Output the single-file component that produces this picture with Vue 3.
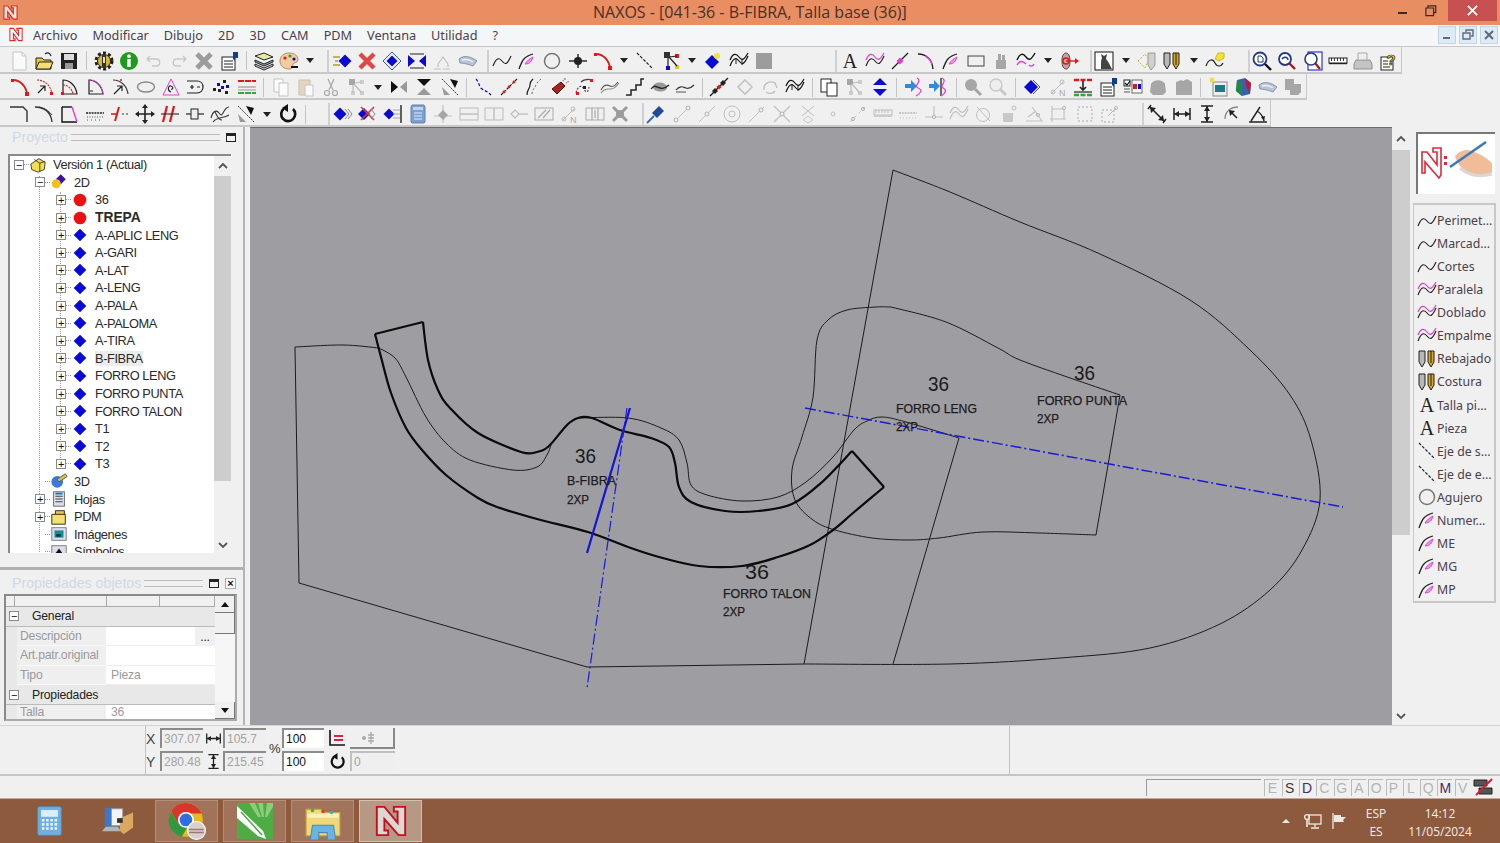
<script setup>
// small helpers so the icon table below stays readable
const L = (d, c = '#111', w = 1.4) => `<path d="${d}" fill="none" stroke="${c}" stroke-width="${w}"/>`
const F = (d, c, s = 'none') => `<path d="${d}" fill="${c}" stroke="${s}"/>`
const O = (x, y, r, f = 'none', s = 'none', w = 1) => `<circle cx="${x}" cy="${y}" r="${r}" fill="${f}" stroke="${s}" stroke-width="${w}"/>`
const R = (x, y, w, h, f, s = 'none') => `<rect x="${x}" y="${y}" width="${w}" height="${h}" fill="${f}" stroke="${s}"/>`
const D = (x, y, r, c) => F(`M${x - r} ${y}L${x} ${y - r}L${x + r} ${y}L${x} ${y + r}Z`, c)

const G = '#a6a6a6'
const PK = '#e23fd0'
const RD = '#e01818'
const BL = '#0a0ad0'
const WAVE = 'M1 15C4 7 7 6 10 10S15 14 19 5'
const WAVE2 = 'M1 9C4 2 7 2 10 6S15 9 19 2'
const ARC = 'M2 3C10 3 16 9 17 17'
const SLIP = F('M1 8C6 4 12 5 19 10L15 15C10 13 5 12 2 12Z', '#b8c4d4', '#8a96a6') + L('M4 9C8 8 12 9 15 11', '#eef')
const PROPS = R(3, 6, 13, 13, '#fff', '#222') + L('M5 10h9M5 13h9M5 16h9', '#222', 1.2) + F('M14 1h5v6h-3v3l-2-2z', '#123a9a')

const icons = {
  doc: F('M4 1h9l4 4v14H4z', '#fafafa', '#c4c4c4') + L('M13 1v4h4', '#c4c4c4', 1),
  open: F('M2 7h6l2 2h7v9H2z', '#e8c840', '#222') + F('M5 11h14l-3 7H2z', '#f4e070', '#222') + L('M11 3c3-2 5-1 6 2', '#222', 1.2),
  save: R(2, 2, 16, 16, '#222') + R(5, 3, 10, 6, '#ddd') + R(6, 12, 8, 6, '#999'),
  gear: O(10, 10, 8, 'none', '#222', 3).replace('/>', ' stroke-dasharray="3 2.2"/>') + O(10, 10, 6.5, '#d8b830', '#222', 1) + R(8, 4, 4, 12, '#333') + R(9, 6, 2, 6, '#ddd'),
  info: O(10, 10, 9, '#1f9a1f') + R(8.3, 8, 3.4, 8, '#fff') + O(10, 5.2, 1.9, '#fff'),
  undo: L('M6 5L3 8l3 3M3 8h9c5 0 5 7 0 7H8', '#c8c8c8', 1.4),
  redo: L('M14 5l3 3-3 3M17 8H8c-5 0-5 7 0 7h4', '#c8c8c8', 1.4),
  xgray: L('M3 3L17 17M17 3L3 17', '#9c9c9c', 5),
  xred: L('M3 3L17 17M17 3L3 17', '#e04848', 4.5),
  props: PROPS,
  layers: F('M1 5l9-3 9 4-9 3z', '#e8e8a8', '#222') + F('M1 9l9 4 9-4v2l-9 4-9-4z', '#8ab', '#222') + F('M1 13l9 4 9-4v2l-9 4-9-4z', '#ddd', '#222'),
  palette: F('M10 2c6 0 9 3 9 7 0 3-4 2-5 4s1 5-4 5c-5 0-9-3-9-8s4-8 9-8z', '#f0cca0', '#b09060') + O(6, 7, 1.6, RD) + O(11, 5, 1.6, '#2a2') + O(15, 8, 1.6, BL) + R(12, 15, 7, 2, '#111'),
  diamArrow: D(13, 10, 6.5, BL) + L('M1 6h7M3 10h3M1 14h7', '#b0a020', 1.4),
  diamDash: D(10, 10, 5.5, BL) + L('M10 1L19 10L10 19L1 10Z', '#3458b0', 1),
  hourglass: F('M1 4l7 6-7 6z', BL) + F('M19 4l-7 6 7 6z', BL) + L('M3 3h14M3 17h14', '#222', 1.2),
  dimTree: L('M2 18h7M11 18h7M6 13l5-7 5 7M6 13v3M16 13v3', '#c0c0c0', 1.2),
  slipper: SLIP,
  wave: L(WAVE, '#222', 1.15),
  curvePink: L('M2 18C5 10 6 6 16 3', '#222', 1.3) + F('M8 13c2-3 4-5 8-7-1 4-3 7-8 7z', '#e898e0', PK),
  circle: O(10, 10, 7.5, 'none', '#777', 1.5),
  cross: L('M1 10h18', '#222', 1.4) + O(10, 10, 4, '#222') + L('M10 3v14', '#222', 1.4),
  arcRed: L('M3 3C10 3 16 9 17 17', '#d02020', 1.8) + R(1, 2, 3, 3, RD) + R(15, 15, 4, 4, RD),
  dash: L('M2 2L18 18', '#222', 1.2).replace('/>', ' stroke-dasharray="3 1.5"/>'),
  tree: R(3, 1, 6, 6, '#333') + R(14, 3, 4, 4, RD) + R(5, 15, 4, 4, BL) + R(14, 14, 4, 4, '#e8c020') + L('M7 7v9M8 6l8-1M8 6l8 9', '#222', 1.2),
  diamYellow: D(9, 11, 7, BL) + O(14, 5, 3, '#f0e040'),
  curvesArrow: L(WAVE2, '#111', 1.2) + L(WAVE, '#111', 1.2) + L('M7 7v6M13 8v6', '#222', 1),
  graySq: R(2, 2, 16, 16, '#9c9c9c'),
  A: `<text x="10" y="17" text-anchor="middle" font-size="20" font-family="Liberation Serif" fill="#222">A</text>`,
  wavePink: L(WAVE2, PK, 1.2) + L(WAVE, '#222', 1.15),
  linePink: L('M2 18L18 2', '#222', 1.2) + D(10, 10, 3.5, PK),
  cornerPink: L('M2 3C10 3 16 8 17 18', '#222', 1.4) + L('M9 5C13 7 15 10 16 13', PK, 1.4),
  rect: R(2, 5, 16, 10, 'none', '#444'),
  hand: F('M5 9h10v9H5zM7 3h3v6H7zM11 4h3v5h-3z', G),
  curvesPink: L('M1 9C4 2 7 2 10 6S15 9 19 2') + L('M1 14C4 9 7 10 10 13', PK) + L('M13 14c2 2 4 1 5-1', PK),
  target: F('M3 10C3 4 5 2 7 2s4 2 4 8-2 8-4 8-4-2-4-8z', '#c8a0a0', '#444') + O(7, 10, 3, 'none', RD, 1.4) + L('M7 10h10', RD, 1.4) + F('M16 7l4 3-4 3z', RD),
  cat: R(1, 1, 18, 18, '#fff', '#111') + F('M7 18c0-7 0-9 1-11L7 3l3 2 3-2-1 5c3 3 4 7 6 10z', '#444'),
  diamDashY: L('M1 10L8 3 12 8 8 17Z', '#c8b820', 1).replace('/>', ' stroke-dasharray="2 1.5"/>') + F('M11 2h7v12l-4 5-3-5z', '#d0d0d0', '#999'),
  pencils: F('M2 2h6v11l-3 5-3-5z', '#b8b8b8', '#222') + F('M11 2h6v11l-3 5-3-5z', '#d8a820', '#222') + L('M14 2v12', '#222', 1),
  yellowCurve: L('M1 15C4 7 8 8 10 12S16 16 18 12', '#222', 1.2) + F('M10 8l3-6h6v5l-5 3z', '#f4e430', '#c8b820'),
  zoomDoc: O(8, 8, 6.5, '#fff', '#223a80', 1.8) + L('M13 13l6 6', '#111', 2.4) + L('M6 5h3l2 2v4H6z', '#223a80', 1),
  zoomBack: O(8, 8, 6, '#fff', '#223a80', 1.8) + L('M12 12l6 6', '#a01818', 2.4) + L('M5 8c2-3 6-2 6 1', '#223a80', 1.4),
  zoomPage: R(5, 1, 14, 18, '#fff', BL) + O(8, 8, 6, '#fff', '#223a80', 1.6) + L('M12 12l5 6', '#a01818', 2.2),
  ruler: R(1, 7, 18, 5, '#fff', '#222') + L('M3.5 7v3M6.5 7v3M9.5 7v3M12.5 7v3M15.5 7v3', '#222', 0.9) + R(1, 12, 18, 1.2, '#222'),
  printer: F('M3 9h14l2 4v5H1v-5z', '#c4c4c4', '#909090') + F('M5 2h9v7H5z', '#eee', '#aaa'),
  help: R(3, 6, 12, 13, '#fff', '#222') + L('M5 10h5M5 13h5M5 16h7', '#222', 1) + `<text x="13" y="14" text-anchor="middle" font-size="15" font-weight="700" font-family="Liberation Sans" fill="#efe020" stroke="#222" stroke-width=".7">?</text>`,
  arcArrow: L(ARC, '#c83030', 1.2).replace('/>', ' stroke-dasharray="2 1"/>') + L('M3 16L10 9M5 9h5v5', '#222', 1.2) + R(15, 15, 3, 3, RD),
  sector: L('M3 3C10 3 16 9 17 17H3z', '#222', 1.2) + L('M3 8C8 8 12 12 13 17', RD, 1.2).replace('/>', ' stroke-dasharray="2 1"/>') + R(1, 15, 3, 3, RD),
  sector2: L('M3 3C10 3 16 9 17 17H3z', '#222', 1.2) + L('M3 3C10 3 16 9 17 17', PK, 1.2).replace('/>', ' stroke-dasharray="2 1"/>') + L('M4 14h3', '#222', 1),
  arcArrow2: L(ARC, '#444', 1.2) + L('M3 17L11 9M6 9h5v5', '#222', 1.2) + O(10, 3, 1, RD),
  ellipse: `<ellipse cx="10" cy="10" rx="8.5" ry="5" fill="none" stroke="#888" stroke-width="1.4"/>`,
  triPink: F('M10 2L18 18H2z', 'none', PK) + L('M10 15c-4-1-3-7 0-6s2 4 0 3', '#222', 1.1),
  dShape: L('M1 4h10c8 0 8 12 0 12H1', '#222', 1.2) + L('M4 10h4M6 8v4M11 10h3', '#222', 1.2),
  dots: R(12, 3, 3, 3, '#222') + R(6, 6, 3, 3, BL) + R(15, 8, 3, 3, BL) + R(2, 11, 3, 3, '#222') + R(10, 9, 3, 3, BL) + R(7, 12, 3, 3, '#222') + R(14, 14, 3, 3, '#222'),
  lines: L('M1 4h18', RD, 2).replace('/>', ' stroke-dasharray="6 1"/>') + L('M1 10h18', '#999', 1.2) + L('M1 13h18', '#999', 1) + L('M1 16h18', '#3a3', 2).replace('/>', ' stroke-dasharray="6 1"/>'),
  copy: F('M3 2h9v13H3z', '#fafafa', '#c4c4c4') + F('M8 6h9v13H8z', '#fafafa', '#c4c4c4'),
  paste: F('M3 3h11v15H3z', '#e2d6c0', '#c8c0b0') + F('M9 8h8v11H9z', '#fafafa', '#c4c4c4'),
  scissors: L('M7 2l5 11M13 2L8 13', G, 1.2) + O(6, 16, 2.5, 'none', G, 1.2) + O(14, 16, 2.5, 'none', G, 1.2),
  treeGray: R(3, 2, 6, 6, G) + R(14, 3, 4, 4, '#ccc') + R(5, 14, 4, 4, '#ccc') + R(14, 14, 4, 4, '#ccc') + L('M7 8v7M9 6l6-1M8 7l7 8', '#bbb', 1.2),
  mirror: F('M2 4l7 6-7 6z', '#111') + F('M18 4l-7 6 7 6z', '#999'),
  mirrorV: F('M3 2h14l-7 7z', '#111') + F('M3 18h14l-7-7z', '#999'),
  mirrorD: L('M2 2L18 18', '#333', 1).replace('/>', ' stroke-dasharray="2 1"/>') + F('M10 2l8 2-3 7z', '#111') + F('M2 10l8 8-6 0z', '#999'),
  dashBlue: L('M2 2c3 3 3 8 6 10s5 2 9 6', BL, 1.2).replace('/>', ' stroke-dasharray="3 2"/>'),
  dashRed: L('M2 18L18 2', '#222', 1.2).replace('/>', ' stroke-dasharray="3 1"/>') + O(5, 15, 1.4, RD) + O(10, 10, 1.4, RD) + O(15, 5, 1.4, RD),
  curveDash: L('M3 18c0-6 3-6 3-10s2-5 3-6', '#222', 1.2) + L('M8 17c0-5 3-6 4-9s3-4 5-6', '#666', 1).replace('/>', ' stroke-dasharray="2 2"/>'),
  rocket: F('M3 12L12 5l4 4-8 8z', '#a82020', '#501010') + L('M14 4l2-3M17 6l3-2M16 2l1 0', '#b05050', 1.2).replace('/>', ' stroke-dasharray="1 1"/>'),
  redCurves: L('M1 16c2-8 6-8 8-4s4 4 5-2', '#444', 1.1).replace('/>', ' stroke-dasharray="2 1.5"/>') + L('M6 5c3-3 8-3 12-2', '#444', 1.1) + R(1, 15, 3, 3, RD) + R(15, 2, 3, 3, RD) + R(8, 9, 3, 3, '#222'),
  curvePair: L('M1 13C4 7 8 8 10 9s5 0 8-4', '#555', 1.1) + L('M1 16C4 11 8 12 11 12s5-2 8-6', '#888', 1.1),
  stairs: L('M1 18h5v-5h5V8h5V2h3', '#222', 1.5),
  waveBlob: F('M3 10c0-6 13-6 14 0s-14 6-14 0z', '#999') + L('M1 12c5-8 8 5 18-4', '#222', 1.3),
  waveSmall: L('M1 13c4-5 7-3 10-2s5 0 8-3', '#333', 1.2) + L('M1 15h10', '#555', 1),
  lineDiam: L('M1 19L19 1', '#222', 1.4) + D(6, 14, 3, '#222') + D(10, 10, 2.6, RD) + D(14, 6, 3, '#222'),
  rotA: D(10, 10, 5.5, 'none') + L('M10 3L17 10L10 17L3 10Z', '#c4c4c4', 1.6),
  rotB: L('M4 13C3 7 9 3 15 6l2 5M15 14c-2 3-6 3-9 1', '#c0c0c0', 1.4),
  copyBlack: R(2, 2, 10, 13, '#fff', '#222') + R(8, 6, 10, 13, '#fff', '#222'),
  blueUpDown: F('M3 8L10 1l7 7z', BL) + F('M3 12h14l-7 7z', BL) + L('M1 10h18', '#eee', 1),
  arrowPink: F('M1 7h6V3l6 6-6 6v-4H1z', '#2c8ce0') + L('M13 1c6 3-4 8 1 10s3 5-2 8', PK, 1.3),
  arrowLine: F('M0 7h5V3l6 6-6 6v-4H0z', '#2c8ce0') + L('M12 1v18', '#111', 1.2) + L('M13 1c6 3-3 8 1 10s3 5-2 8', PK, 1.3),
  zoomSolid: O(8, 8, 6, G) + L('M12 12l6 6', G, 3),
  zoomLight: O(8, 8, 6, '#eee', '#c8c8c8', 1.4) + L('M12 12l6 6', '#c8c8c8', 3),
  diamHalf: D(8, 10, 7, BL) + L('M10 3l7 7-7 7', '#555', 1),
  nGray: L('M3 17L15 5', '#bbb', 1) + O(5, 15, 2, 'none', '#bbb') + O(14, 5, 2, 'none', '#bbb') + `<text x="11" y="19" font-size="9" font-family="Liberation Sans" fill="#aaa">N</text>`,
  redGreen: L('M1 3h18', RD, 2.4).replace('/>', ' stroke-dasharray="5 1.5"/>') + L('M10 4v9M7 10l3 3 3-3', '#222', 1.6) + L('M1 15h18', '#222', 1.2) + L('M1 18h18', '#3a3', 2.4).replace('/>', ' stroke-dasharray="5 1.5"/>'),
  checkRB: R(1, 3, 6, 6, '#fff', '#222') + L('M2 6l2 2 3-4', '#111', 1.2) + L('M1 12h6M1 15h6', '#555', 1) + R(9, 3, 10, 13, '#fff', '#666') + R(10, 7, 4, 5, RD) + R(15, 7, 3, 5, BL),
  blobA: F('M3 7c2-5 12-5 14 0l1 8-3 3H5l-3-3z', G),
  blobB: F('M2 5l5-2 2 1 4-2 5 3v13H2z', G),
  imgNew: R(5, 5, 14, 14, '#eee', '#888') + R(7, 8, 10, 7, '#1a7a8a') + O(4, 3, 2.5, '#f0e040'),
  colors: F('M4 3l8-2 6 5-1 11-8 2-6-5z', '#3a60b0') + F('M4 3l5 2 0 14-6-5z', '#208a40') + F('M12 1l6 5-1 11-4-8z', '#b02040'),
  blobC: F('M2 2h9v5h7v8l-3 3H7v-5H2z', G),
  corner: L('M1 3h13l4 4v11', '#333', 1.4),
  cornerC: L('M1 3C10 3 17 8 18 18', '#333', 1.4) + L('M5 3c5 1 9 3 13 8', '#333', 1),
  boxPink: L('M3 3h10', '#111', 1.4) + L('M3 3v15h15', '#111', 1.4) + L('M13 3l5 15', PK, 1.4),
  dashes: L('M1 9h18', '#222', 1.4).replace('/>', ' stroke-dasharray="2 .8"/>') + L('M2 13h16', '#555', 1).replace('/>', ' stroke-dasharray="1 1.5"/>') + L('M2 16h16', '#555', 1).replace('/>', ' stroke-dasharray="1 3"/>'),
  redLine: L('M1 10h7', RD, 1.6) + L('M9 3L5 17', RD, 2) + L('M12 10h7', '#333', 1).replace('/>', ' stroke-dasharray="2 2"/>'),
  move: L('M10 1v18M1 10h18', '#222', 1.6) + F('M10 0l3 4H7zM10 20l3-4H7zM0 10l4-3v6zM20 10l-4-3v6z', '#222'),
  redSlash: L('M7 2L3 18M14 2L10 18', RD, 2.2) + L('M1 10h18', '#333', 1.2),
  lineRect: L('M1 10h18', '#222', 1.2) + R(6, 5, 7, 10, '#eee', '#222'),
  shapeCurve: L('M1 14c2-8 6-8 8-5s3 2 4 0 3-6 6-6M3 18c5-6 10-3 16-7M5 8c2 3 3 8 7 8', '#333', 1.1),
  rotBlack: L('M6 4.5A7 7 0 1 0 15 5', '#111', 2.6) + F('M10 0L4 4l6 4z', '#111'),
  diamTriple: D(7, 10, 6.5, BL) + L('M12 5l4 5-4 5M15 5l4 5-4 5', '#888', 1),
  diamX: D(6, 10, 6, BL) + L('M3 3L16 16M16 3L3 16', '#d04040', 1.6) + L('M13 5l4 5-4 5', '#888', 1),
  diamBar: D(6, 10, 5.5, BL) + L('M10 6h7M10 10h7M10 14h7', '#aaa', 1) + L('M18 1v18', '#222', 1.4),
  calc: F('M4 1h12l1 2v15l-1 1H4l-1-1V3z', '#7ea0d0', '#6080b0') + R(5, 3, 10, 3, '#c0d4ea') + L('M6 9h8M6 12h8M6 15h8', '#c0d4ea', 1.4),
  diamCross: L('M10 1v18M1 12h18', '#c0c0c0', 1.2) + D(10, 11, 5, G),
  rectH: R(1, 4, 18, 12, 'none', '#bbb') + L('M1 10h18', '#bbb', 1.4),
  rectV: R(1, 4, 18, 12, 'none', '#bbb') + L('M10 4v12', '#bbb', 1.4),
  diamLine: L('M10 10h9', '#bbb', 1.2) + L('M2 10l4-4 4 4-4 4z', '#bbb', 1.1),
  boxSlash: R(1, 4, 18, 12, 'none', '#aaa') + L('M4 14L12 6M9 14l7-8', '#aaa', 1.2),
  boxArrow: R(1, 4, 18, 12, 'none', '#aaa') + L('M7 4v12M13 4v12M10 6v8', '#aaa', 1.2),
  starGray: L('M3 3L17 17M17 3L3 17', '#9c9c9c', 3) + O(10, 10, 4, '#9c9c9c'),
  pin: L('M1 19l7-7', '#3a6ab0', 2) + F('M6 9l7-7 5 5-7 7z', '#1f4a98'),
  pt1: L('M2 18L18 2', '#c0c0c0', 1) + O(4, 16, 2, '#f0f0f0', '#b0b0b0') + O(16, 4, 2, '#f0f0f0', '#b0b0b0'),
  pt2: L('M2 18L18 2', '#c0c0c0', 1) + O(10, 10, 2, '#f0f0f0', '#b0b0b0'),
  pt3: O(10, 10, 8, 'none', '#c0c0c0') + O(10, 10, 3, 'none', '#c0c0c0'),
  pt4: L('M2 18L17 3', '#c0c0c0', 1) + O(14, 6, 2, '#f0f0f0', '#b0b0b0'),
  pt5: L('M2 2L18 18M18 2L2 18', '#c0c0c0', 1.2) + O(10, 10, 2, '#f0f0f0', '#b0b0b0'),
  pt6: L('M4 2l12 10M16 2L4 12', '#c0c0c0', 1) + L('M10 12l5 4-5 3-5-3z', '#c8c8c8', 1),
  pt7: O(10, 10, 2, 'none', '#c0c0c0'),
  pt8: L('M2 18L18 2', '#c0c0c0', 1).replace('/>', ' stroke-dasharray="3 3"/>') + O(5, 15, 1.6, 'none', '#b0b0b0') + O(15, 5, 1.6, 'none', '#b0b0b0'),
  rulerG: R(1, 6, 18, 5, 'none', '#bbb') + L('M3 6v3M6 6v3M9 6v3M12 6v3M15 6v3', '#bbb', 1) + R(1, 11, 18, 2, '#ccc'),
  dashG: L('M1 9h18', '#bbb', 1.4).replace('/>', ' stroke-dasharray="2 .8"/>') + L('M2 14h16', '#bbb', 1).replace('/>', ' stroke-dasharray="1 2"/>'),
  perp: L('M1 13h18M10 2v11', '#c0c0c0', 1.2) + O(10, 13, 1.6, '#f0f0f0', '#b0b0b0'),
  waveG: L(WAVE2, '#c0c0c0', 1.2) + L(WAVE, '#c0c0c0', 1.2),
  circLine: O(9, 11, 6.5, 'none', '#c0c0c0') + L('M3 3l13 14', '#c0c0c0', 1),
  handG: F('M4 9h10v9H4z', '#c8c8c8') + O(15, 4, 2, 'none', '#bbb'),
  angleG: L('M2 17h16L8 3M4 13l8-6', '#c0c0c0', 1.1) + O(14, 11, 1.6, 'none', '#bbb'),
  squareG: L('M3 2v16M1 15h16M3 5h12v10', '#c0c0c0', 1.1) + O(15, 4, 1.6, 'none', '#bbb'),
  dashSq: L('M3 3h14v14H3z', '#c0c0c0', 1.4).replace('/>', ' stroke-dasharray="2 2"/>'),
  dashSq2: L('M2 6h12v12H2z', '#c0c0c0', 1.4).replace('/>', ' stroke-dasharray="2 2"/>') + L('M8 12l8-8', '#bbb', 1) + O(16, 4, 1.6, 'none', '#bbb'),
  dimD: L('M4 1L1 5M19 15l-3 4M3 3l14 14', '#222', 1.5) + F('M3 3l6 1-5 5zM17 17l-6-1 5-5z', '#222'),
  dimH: L('M2 4v12M18 4v12M2 10h16', '#222', 1.5) + F('M2 10l5-3v6zM18 10l-5-3v6z', '#222'),
  dimV: L('M4 2h12M4 18h12M10 2v16', '#222', 1.5) + F('M10 2l-3 5h6zM10 18l-3-5h6z', '#222'),
  radius: L('M2 15C2 7 8 3 15 3', '#888', 1.3) + L('M14 14L7 7', '#222', 1.5) + F('M6 6l6 1-5 5z', '#222'),
  angle: L('M1 18h18M3 17L12 3', '#222', 1.4) + L('M9 7c3 2 6 4 7 10', '#222', 1.4) + F('M16 17l-3-4 4-1z', '#222')
}

// "|" separator, "v" dropdown arrow, "E12" toolbar end of that width, "_12" empty gap
function parse(s) {
  return s.trim().split(/\s+/).map((k) => {
    if (k === '|') return { t: 'sep', w: 9 }
    if (k === 'v') return { t: 'drop', w: 17.6 }
    if (k[0] === 'E') return { t: 'grip', w: +k.slice(1) }
    if (k[0] === '_') return { t: 'gap', w: +k.slice(1) }
    return { t: 'icon', w: 25.2, name: k }
  })
}

const toolbars = [
  { pad: 6.4, items: parse(`doc open save | gear info undo redo xgray props | layers palette v E10
    diamArrow xred diamDash hourglass dimTree slipper E9.2
    wave curvePink circle cross arcRed v dash tree v diamYellow curvesArrow graySq _51 E10
    A wavePink linePink cornerPink curvePink rect hand curvesPink v target E10
    cat v diamDashY pencils v yellowCurve E22 zoomDoc zoomBack zoomPage ruler printer help`) },
  { pad: 7.4, items: parse(`arcRed arcArrow sector sector2 arcArrow2 ellipse triPink dShape dots lines |
    copy paste scissors treeGray v mirror mirrorV mirrorD |
    dashBlue dashRed curveDash rocket redCurves curvePair stairs waveBlob waveSmall |
    lineDiam rotA rotB curvesArrow | copyBlack treeGray blueUpDown | arrowPink arrowLine |
    zoomSolid zoomLight | diamHalf nGray redGreen props checkRB blobA blobB | imgNew colors slipper blobC`) },
  { pad: 6.4, items: parse(`corner cornerC boxPink dashes redLine move redSlash lineRect shapeCurve mirrorD v rotBlack | E20
    diamTriple diamX diamBar calc diamCross rectH rectV diamLine boxSlash nGray boxArrow starGray E11.6
    pin pt1 pt2 pt3 pt4 pt5 pt6 pt7 pt8 rulerG dashG perp waveG circLine handG angleG squareG dashSq dashSq2 E22
    dimD dimH dimV radius angle`) }
]

const menus = ['Archivo', 'Modificar', 'Dibujo', '2D', '3D', 'CAM', 'PDM', 'Ventana', 'Utilidad', '?']

const treeIcons = {
  root: F('M2 9l9-6 7 4-1 8-7 3-7-3z', '#f0e050', '#333') + L('M6 4l6 4v9M12 8l6-2', '#333', 1),
  two: D(12, 7, 5.5, '#3a10a8') + O(7, 12, 5, '#f0c020'),
  three: O(8, 11, 6.5, '#3a7ad8') + F('M8 8l9-6 2 3-9 6z', '#d8c050', '#555'),
  red: O(10, 10, 7, '#ee1010'),
  blue: D(10, 10, 7, '#0808d8'),
  sheets: R(4, 2, 12, 16, '#dde', '#666') + L('M6 7h8M6 10h8M6 13h8', '#444', 1.2) + R(6, 3, 8, 2, '#27a'),
  pdm: F('M6 3h10v5H6z', '#e8c840', '#222') + F('M2 7h15v11H2z', '#f4e070', '#222'),
  images: R(2, 3, 16, 14, '#dde', '#777') + R(5, 6, 10, 8, '#1a8a9a') + R(7, 10, 5, 3, '#0a3a2a'),
  symbols: R(2, 3, 16, 14, '#dde', '#777') + F('M10 6l5 7H5z', '#111')
}

const tree = [
  { label: 'Versión 1 (Actual)', depth: 0, icon: 'root', box: '−' },
  { label: '2D', depth: 1, icon: 'two', box: '−' },
  { label: '36', depth: 2, icon: 'red', box: '+' },
  { label: 'TREPA', depth: 2, icon: 'red', box: '+', bold: true },
  ...['A-APLIC LENG', 'A-GARI', 'A-LAT', 'A-LENG', 'A-PALA', 'A-PALOMA', 'A-TIRA', 'B-FIBRA', 'FORRO LENG', 'FORRO PUNTA', 'FORRO TALON', 'T1', 'T2', 'T3']
    .map((label) => ({ label, depth: 2, icon: 'blue', box: '+', soft: label === 'B-FIBRA' })),
  { label: '3D', depth: 1, icon: 'three' },
  { label: 'Hojas', depth: 1, icon: 'sheets', box: '+' },
  { label: 'PDM', depth: 1, icon: 'pdm', box: '+' },
  { label: 'Imágenes', depth: 1, icon: 'images' },
  { label: 'Símbolos', depth: 1, icon: 'symbols' }
]

const tools = [
  ['wave', 'Perimet...'], ['wave', 'Marcad...'], ['wave', 'Cortes'], ['wavePink', 'Paralela'], ['wavePink', 'Doblado'],
  ['wavePink', 'Empalme'], ['pencils', 'Rebajado'], ['pencils', 'Costura'], ['A', 'Talla pi...'], ['A', 'Pieza'],
  ['dash', 'Eje de s...'], ['dash', 'Eje de e...'], ['circle', 'Agujero'], ['curvePink', 'Numer...'], ['curvePink', 'ME'],
  ['curvePink', 'MG'], ['curvePink', 'MP']
]

const layers = [
  ['E', 0], ['S', 1], ['D', 2], ['C', 0], ['G', 0], ['A', 0], ['O', 0], ['P', 0], ['L', 0], ['Q', 0], ['M', 2], ['V', 0]
]

// Catmull-Rom through the points, so the pattern pieces stay smooth
function smooth(p, closed = false) {
  const at = (i) => (closed ? p[(i + p.length) % p.length] : p[Math.max(0, Math.min(p.length - 1, i))])
  let d = `M${p[0][0]} ${p[0][1]}`
  const n = closed ? p.length : p.length - 1
  for (let i = 0; i < n; i++) {
    const [a, b, c, e] = [at(i - 1), at(i), at(i + 1), at(i + 2)]
    d += `C${(b[0] + (c[0] - a[0]) / 6).toFixed(1)} ${(b[1] + (c[1] - a[1]) / 6).toFixed(1)} ${(c[0] - (e[0] - b[0]) / 6).toFixed(1)} ${(c[1] - (e[1] - b[1]) / 6).toFixed(1)} ${c[0]} ${c[1]}`
  }
  return closed ? d + 'Z' : d
}

const fibra = [
  'M375 334L423 322',
  smooth([[423, 322], [428, 360], [438, 390], [450, 408], [478, 433], [521, 452], [537, 452], [549, 446], [567, 425], [578, 418], [592, 418], [620, 430], [651, 438], [669, 447], [675, 463], [679, 487], [691, 502], [725, 511], [758, 511], [792, 504], [821, 483], [852, 451]]),
  'M852 451L884 487',
  smooth([[884, 487], [853, 513], [833, 530], [810, 545], [778, 557], [742, 566], [699, 566], [659, 557], [628, 547], [588, 532], [537, 519], [497, 507], [478, 498], [446, 475], [422, 450], [406, 428], [391, 393], [381, 357], [375, 334]])
]

const thin = [
  smooth([[379, 348], [395, 358], [406, 377], [426, 417], [446, 443], [470, 460], [513, 470], [537, 467], [547, 455], [551, 445]]),
  smooth([[578, 418], [628, 418], [661, 428], [679, 440], [687, 463], [691, 485], [707, 495], [742, 501], [778, 497], [806, 482], [833, 457], [854, 430], [867, 421], [882, 417], [906, 422], [959, 438]]),
  smooth([[295, 347], [343, 345], [379, 348]]),
  'M295 347L299 583L587 667L804 664L893 170',
  'M893 664L959 438',
  smooth([[804, 664], [950, 664], [1060, 658], [1150, 648], [1220, 624], [1270, 590], [1302, 550], [1320, 500], [1311, 440], [1290, 395], [1250, 350], [1190, 300], [1100, 254], [1020, 222], [950, 192], [893, 170]]),
  smooth([[891, 307], [876, 307], [847, 310], [828, 320], [817, 340], [813, 397], [802, 437], [792, 470], [795, 500], [813, 520], [835, 530], [872, 538], [909, 540], [939, 538], [983, 532], [1039, 533], [1096, 535]]),
  'M1096 535L1120 395',
  smooth([[1120, 395], [1076, 380], [1020, 360], [998, 348], [946, 322], [891, 307]])
]

const labels = [
  { n: [575, 463, 21], t: 'B-FIBRA', x: 567, y: 485, w: 49, p: 504 },
  { n: [745, 579, 24], t: 'FORRO TALON', x: 723, y: 598, w: 88, p: 616 },
  { n: [928, 391, 21], t: 'FORRO LENG', x: 896, y: 413, w: 81, p: 431 },
  { n: [1074, 380, 21], t: 'FORRO PUNTA', x: 1037, y: 405, w: 90, p: 423 }
]
</script>

<template>
  <div class="app">
    <div class="titlebar">
      <svg class="title-logo" viewBox="0 0 16 16"><path d="M1 1h4l6 8V3H9V1h6v14h-4L5 7v6h2v2H1z" fill="#fbe6dc" stroke="#e02828" stroke-width="1.2"/></svg>
      <span class="title-text">NAXOS - [041-36 - B-FIBRA, Talla base (36)]</span>
      <div class="win-btns">
        <span class="win-min"></span>
        <svg class="win-max" viewBox="0 0 14 14"><path d="M3.5 3.5V1h9v8H10M1 3.5h9v9H1z" fill="none" stroke="#3a2a22" stroke-width="1.4"/></svg>
        <span class="win-close">
          <svg viewBox="0 0 12 12" width="11" height="11"><path d="M1 1l10 10M11 1L1 11" stroke="#fff" stroke-width="2"/></svg>
        </span>
      </div>
    </div>

    <div class="menubar">
      <svg class="menu-logo" viewBox="0 0 16 16"><path d="M1 1h4l6 8V3H9V1h6v14h-4L5 7v6h2v2H1z" fill="#fff" stroke="#e02828" stroke-width="1.2"/></svg>
      <span v-for="m in menus" :key="m" class="menu-item">{{ m }}</span>
      <div class="mdi-btns">
        <span class="mdi-btn"><svg viewBox="0 0 12 12"><path d="M2 9h7" stroke="#667" stroke-width="2"/></svg></span>
        <span class="mdi-btn"><svg viewBox="0 0 12 12"><path d="M4 3V1h7v6H9M1 4h7v6H1z" fill="none" stroke="#667" stroke-width="1.4"/></svg></span>
        <span class="mdi-btn"><svg viewBox="0 0 12 12"><path d="M2 2l8 8M10 2l-8 8" stroke="#667" stroke-width="2"/></svg></span>
      </div>
    </div>

    <div class="toolbars">
      <div v-for="(bar, i) in toolbars" :key="i" class="tb-row">
        <div class="tb" :style="{ paddingLeft: bar.pad + 'px' }">
          <template v-for="(it, j) in bar.items" :key="j">
            <span v-if="it.t === 'icon'" class="tb-cell" :style="{ width: it.w + 'px' }">
              <svg class="tb-icon" viewBox="0 0 20 20" v-html="icons[it.name]"></svg>
            </span>
            <span v-else-if="it.t === 'drop'" class="tb-cell" :style="{ width: it.w + 'px' }"><i class="caret"></i></span>
            <span v-else-if="it.t === 'sep'" class="tb-sep" :style="{ width: it.w + 'px' }"></span>
            <span v-else-if="it.t === 'grip'" class="tb-grip" :style="{ width: it.w + 'px' }"></span>
            <span v-else :style="{ width: it.w + 'px' }"></span>
          </template>
        </div>
      </div>
    </div>

    <div class="main">
      <div class="left">
        <div class="dock-head">
          <span class="dock-title">Proyecto</span>
          <span class="dock-lines"></span>
          <span class="dock-btn"></span>
        </div>
        <div class="tree-box">
          <div class="tree">
            <span class="vline vline-a"></span>
            <span class="vline vline-b"></span>
            <div v-for="n in tree" :key="n.label" class="node" :style="{ paddingLeft: 4 + n.depth * 21 + 'px' }">
              <span class="node-box" :class="{ empty: !n.box }">{{ n.box }}</span>
              <span class="node-dots"></span>
              <svg class="node-icon" viewBox="0 0 20 20" v-html="treeIcons[n.icon]"></svg>
              <span class="node-label" :class="{ bold: n.bold, soft: n.soft }">{{ n.label }}</span>
            </div>
          </div>
          <div class="tree-scroll">
            <svg class="chev" viewBox="0 0 12 12"><path d="M2 8l4-4 4 4" fill="none" stroke="#555" stroke-width="1.8"/></svg>
            <span class="tree-thumb"></span>
            <svg class="chev" viewBox="0 0 12 12"><path d="M2 4l4 4 4-4" fill="none" stroke="#555" stroke-width="1.8"/></svg>
          </div>
        </div>
        <div class="dock-split"></div>
        <div class="dock-head prop-head">
          <span class="dock-title">Propiedades objetos</span>
          <span class="dock-lines"></span>
          <span class="dock-btn"></span>
          <span class="dock-btn close">×</span>
        </div>
        <div class="props">
          <div class="prop-grid">
            <div class="prop-cols"><span></span><span></span><span></span><span></span></div>
            <div class="prop-group"><span class="node-box">−</span>General</div>
            <div class="prop-row"><span class="prop-key">Descripción</span><span class="prop-val">
              <i class="dots-btn">...</i></span></div>
            <div class="prop-row"><span class="prop-key">Art.patr.original</span><span class="prop-val"></span></div>
            <div class="prop-row"><span class="prop-key">Tipo</span><span class="prop-val">Pieza</span></div>
            <div class="prop-group"><span class="node-box">−</span>Propiedades</div>
            <div class="prop-row last"><span class="prop-key">Talla</span><span class="prop-val">36</span></div>
          </div>
          <div class="prop-scroll">
            <span class="prop-arrow"><i class="tri up"></i></span>
            <span class="prop-thumb"></span>
            <span class="prop-arrow end"><i class="tri"></i></span>
          </div>
        </div>
      </div>

      <div class="canvas">
        <svg viewBox="250 128 1142 597" width="1142" height="597">
          <path v-for="(d, i) in thin" :key="i" :d="d" fill="none" stroke="#1c1c1c" stroke-width="1"/>
          <path v-for="(d, i) in fibra" :key="'f' + i" :d="d" fill="none" stroke="#0a0a0a" stroke-width="2.2"/>
          <path d="M630 408L587 553" stroke="#1414d8" stroke-width="2.2"/>
          <path d="M627 408L587 688" stroke="#1a1ae0" stroke-width="1.2" stroke-dasharray="11 3 2 3" fill="none"/>
          <path d="M805 408L1343 507" stroke="#1a1ad8" stroke-width="1.5" stroke-dasharray="11 3 2 3" fill="none"/>
          <g v-for="l in labels" :key="l.t" class="plabels">
            <text :x="l.n[0]" :y="l.n[1]" font-size="20" :textLength="l.n[2]" lengthAdjust="spacingAndGlyphs">36</text>
            <text :x="l.x" :y="l.y" font-size="12" :textLength="l.w" lengthAdjust="spacingAndGlyphs" stroke="#222" stroke-width="0.25">{{ l.t }}</text>
            <text :x="l.x" :y="l.p" font-size="12" textLength="22" lengthAdjust="spacingAndGlyphs" stroke="#222" stroke-width="0.25">2XP</text>
          </g>
        </svg>
      </div>

      <div class="vscroll">
        <svg class="chev big" viewBox="0 0 12 12"><path d="M2 8l4-4 4 4" fill="none" stroke="#555" stroke-width="1.8"/></svg>
        <span class="v-thumb"></span>
        <svg class="chev big" viewBox="0 0 12 12"><path d="M2 4l4 4 4-4" fill="none" stroke="#555" stroke-width="1.8"/></svg>
      </div>

      <div class="right">
        <div class="logo-box">
          <svg viewBox="0 0 78 60" width="78" height="60">
            <path d="M4 18h5l10 13V18h-4v-4h8v27l-2 3-14-16v11H4z" fill="#fff" stroke="#e02838" stroke-width="1.6"/>
            <path d="M26 22h3v3h-3zM26 28h3v3h-3z" fill="#e02838"/>
            <path d="M37 22c5-6 12-7 17-5 6 2 14 6 20 12v9c-6 5-13 5-19 3-7-3-15-8-18-19z" fill="#f0bd98"/>
            <path d="M42 34c8 7 18 10 32 6" fill="none" stroke="#d8d8d8" stroke-width="3"/>
            <path d="M32 33L68 8" stroke="#3a7ab8" stroke-width="2.6"/>
          </svg>
        </div>
        <div class="tools">
          <div v-for="t in tools" :key="t[1]" class="tool">
            <svg class="tool-icon" viewBox="0 0 20 20" v-html="icons[t[0]]"></svg>
            <span>{{ t[1] }}</span>
          </div>
        </div>
      </div>
    </div>

    <div class="coords-bar">
      <div class="coords">
        <span class="c-lab">X</span>
        <span class="c-in off">307.07</span>
        <svg class="c-icon" viewBox="0 0 20 20" v-html="icons.dimH"></svg>
        <span class="c-in off">105.7</span>
        <span class="c-pct">%</span>
        <span class="c-in on">100</span>
        <svg class="c-icon axes" viewBox="0 0 20 20"><path d="M3 2v15h15" fill="none" stroke="#111" stroke-width="1.6"/><path d="M7 8h9M7 12h9" stroke="#e02040" stroke-width="1.8"/></svg>
        <span class="c-btn">
          <svg viewBox="0 0 24 16" width="24" height="16"><path d="M11 2v12M8 5h6M8 8h6M8 11h6" stroke="#aaa" stroke-width="1.4" fill="none"/><circle cx="4" cy="8" r="2" fill="#aaa"/></svg>
        </span>
        <span class="c-lab">Y</span>
        <span class="c-in off">280.48</span>
        <svg class="c-icon" viewBox="0 0 20 20" v-html="icons.dimV"></svg>
        <span class="c-in off">215.45</span>
        <span class="c-in on">100</span>
        <svg class="c-icon" viewBox="0 0 20 20" v-html="icons.rotBlack"></svg>
        <span class="c-in off last">0</span>
      </div>
    </div>

    <div class="status">
      <span class="st-box"></span>
      <span v-for="l in layers" :key="l[0]" class="st-key" :class="'k' + l[1]">{{ l[0] }}</span>
      <svg class="st-net" viewBox="0 0 22 18" width="22" height="18"><path d="M2 2h13v6H2zM7 10h13v6H7z" fill="#555" stroke="#222"/><path d="M4 17L20 1" stroke="#e01830" stroke-width="2"/></svg>
    </div>

    <div class="taskbar">
      <div class="task-slot">
        <svg viewBox="0 0 32 36" width="27" height="32"><rect x="2" y="1" width="28" height="34" rx="2" fill="#6fb0e0" stroke="#4a88bc"/><rect x="6" y="5" width="20" height="8" fill="#dcecf8"/><path d="M7 17h18M7 22h18M7 27h18" stroke="#e4f2fc" stroke-width="3" stroke-dasharray="3 2"/></svg>
      </div>
      <div class="task-slot explorer">
        <svg viewBox="0 0 36 34" width="36" height="32"><rect x="4" y="3" width="14" height="20" fill="#3a78c8"/><path d="M1 28l4-5h13l3 5z" fill="#aeb6be"/><rect x="11" y="4" width="12" height="18" fill="#f4f4f4" stroke="#999"/><path d="M20 14l14-6v16l-10 7-4-4z" fill="#dca860"/><rect x="17" y="14" width="6" height="5" fill="#333"/></svg>
      </div>
      <div class="task-btn">
        <svg viewBox="0 0 36 36" width="38" height="38">
          <circle cx="17" cy="17" r="16" fill="#e8b820"/>
          <path d="M17 1A16 16 0 0 0 3 9l7 12 7-10h15A16 16 0 0 0 17 1z" fill="#d8362a"/>
          <path d="M3 9A16 16 0 0 0 13 33l7-12-10 0z" fill="#2e9a40"/>
          <circle cx="17" cy="17" r="7.5" fill="#fff"/><circle cx="17" cy="17" r="6" fill="#2e6ee0"/>
          <circle cx="27" cy="27" r="8.5" fill="#d8d0cc" stroke="#fff"/><path d="M20 26h14M20 29h14" stroke="#a07878" stroke-width="1.4"/>
        </svg>
      </div>
      <div class="task-btn">
        <svg viewBox="0 0 36 36" width="36" height="36">
          <rect width="36" height="36" fill="#4eac44"/>
          <path d="M12 0l9 14h3L18 0zM21 0l4 14h2L26 0zM30 0l-2 14h2l6-10V0z" fill="#8ccc7c"/>
          <path d="M0 3l26 25 3 8-8-3L0 15z" fill="#fff"/><path d="M4 9l21 23" stroke="#4eac44" stroke-width="1.6"/>
        </svg>
      </div>
      <div class="task-btn">
        <svg viewBox="0 0 36 36" width="38" height="38">
          <path d="M2 7h14l2 3h16v22H2z" fill="#f0d878" stroke="#c8a840"/>
          <path d="M3 11h30v4H3z" fill="#fbf0b8"/>
          <circle cx="8" cy="8" r="1.6" fill="#4a4"/><circle cx="18" cy="9" r="1.6" fill="#c44"/><circle cx="26" cy="10" r="1.6" fill="#4ac"/>
          <path d="M8 22h20l2 14h-8v-7h-8v7H6z" fill="#6ab4e0" stroke="#4a88bc"/>
        </svg>
      </div>
      <div class="task-btn active">
        <svg viewBox="0 0 36 36" width="34" height="36">
          <path d="M3 3h8l14 17V8h-4V3h12v30h-7L11 16v12h4v5H3z" fill="#dcd8d4" stroke="#c80e1e" stroke-width="2"/>
        </svg>
      </div>
      <div class="tray">
        <i class="tray-up"></i>
        <svg viewBox="0 0 20 20" width="20" height="20"><rect x="6" y="4" width="12" height="9" fill="none" stroke="#f0e8e0" stroke-width="1.3"/><path d="M12 13v3M8 17h8" stroke="#f0e8e0" stroke-width="1.3"/><circle cx="4" cy="6" r="2.4" fill="none" stroke="#f0e8e0" stroke-width="1.3"/><path d="M4 9v7" stroke="#f0e8e0" stroke-width="1.6"/></svg>
        <svg viewBox="0 0 20 20" width="20" height="20"><path d="M4 2v16" stroke="#f0e8e0" stroke-width="1.3"/><path d="M5 4h7v2h5l-3 3 1 2H5z" fill="#f0e8e0"/></svg>
        <div class="lang"><span>ESP</span><span>ES</span></div>
        <div class="clock"><span>14:12</span><span>11/05/2024</span></div>
      </div>
    </div>
  </div>
</template>

<style scoped>
.app {
  width: 1500px;
  height: 843px;
  overflow: hidden;
  display: flex;
  flex-direction: column;
  background: #f0f0f0;
  font-family: "Noto Sans", "Liberation Sans", sans-serif;
  color: #333;
}

.titlebar {
  height: 25px;
  flex: none;
  background: #e98d63;
  display: flex;
  align-items: center;
  position: relative;
}
.title-logo {
  width: 15px;
  height: 15px;
  margin-left: 3px;
}
.title-text {
  position: absolute;
  left: 593px;
  top: 2px;
  font-family: "Open Sans", sans-serif;
  font-size: 16px;
  line-height: 21px;
  color: #4a3026;
  white-space: nowrap;
}
.win-btns {
  margin-left: auto;
  display: flex;
  align-items: center;
  height: 21px;
  align-self: flex-start;
  margin-right: 3px;
}
.win-min {
  width: 9px;
  height: 2px;
  background: #3a2a22;
  margin: 5px 18px 0 0;
}
.win-max {
  width: 12px;
  height: 12px;
  margin-right: 11px;
}
.win-close {
  width: 49px;
  height: 21px;
  background: #c75050;
  display: flex;
  align-items: center;
  justify-content: center;
}

.menubar {
  height: 22px;
  flex: none;
  background: #f5f6f7;
  border-bottom: 1px solid #c8c8c8;
  box-sizing: border-box;
  display: flex;
  align-items: center;
  gap: 15px;
  padding-left: 9px;
  padding-bottom: 2px;
  font-size: 12.7px;
}
.menu-logo {
  width: 14px;
  height: 15px;
  margin-right: -5px;
}
.menu-item {
  color: #4a3f4c;
  white-space: nowrap;
}
.mdi-btns {
  margin-left: auto;
  display: flex;
  gap: 3px;
  padding-right: 2px;
}
.mdi-btn {
  width: 18px;
  height: 18px;
  background: #dcebf7;
  border: 1px solid #c4d4e0;
  box-sizing: border-box;
  display: flex;
  align-items: center;
  justify-content: center;
}
.mdi-btn svg {
  width: 12px;
  height: 12px;
}

.toolbars {
  height: 80px;
  flex: none;
  display: flex;
  flex-direction: column;
}
.tb-row {
  height: 26.66px;
  display: flex;
}
.tb {
  display: flex;
  align-items: center;
  border-bottom: 2px solid #c8c8c8;
  border-right: 1px solid #c8c8c8;
  box-sizing: border-box;
  padding-top: 3px;
}
.tb-cell {
  flex: none;
  display: flex;
  align-items: center;
  justify-content: center;
  height: 100%;
}
.tb-icon {
  width: 20px;
  height: 20px;
}
.caret {
  width: 0;
  height: 0;
  border-left: 4.5px solid transparent;
  border-right: 4.5px solid transparent;
  border-top: 5px solid #222;
}
.tb-sep {
  flex: none;
  height: 19px;
  background: linear-gradient(#c4c4c4, #c4c4c4) center / 1px 100% no-repeat;
}
.tb-grip {
  flex: none;
  height: 100%;
  border-right: 2px solid #d0d0d0;
  box-sizing: border-box;
}

.main {
  height: 598px;
  flex: none;
  display: flex;
}

.left {
  width: 245px;
  margin-right: 5px;
  border-right: 2px solid #b4b4b4;
  box-sizing: border-box;
  display: flex;
  flex-direction: column;
  flex: none;
}
.dock-head {
  height: 27px;
  flex: none;
  display: flex;
  align-items: center;
  padding: 0 7px 7px 12px;
  box-sizing: border-box;
  gap: 3px;
}
.dock-title {
  font-family: "Liberation Sans", sans-serif;
  font-size: 14.2px;
  color: #cfd9e6;
  white-space: nowrap;
}
.dock-lines {
  flex: 1;
  height: 5px;
  border-top: 1px solid #bcbcbc;
  border-bottom: 1px solid #bcbcbc;
  margin-top: 1px;
}
.dock-btn {
  width: 10px;
  height: 9px;
  border: 1px solid #222;
  border-top-width: 3px;
  box-sizing: border-box;
  margin-left: 3px;
  background: #f0f0f0;
}
.dock-btn.close {
  border: 1px solid #aaa;
  width: 11px;
  height: 11px;
  font: bold 11px/8px "Liberation Sans", sans-serif;
  color: #111;
  text-align: center;
  background: #fff;
}

.tree-box {
  height: 399px;
  flex: none;
  margin: 0 12px 0 8px;
  border-top: 2px solid #8a8a8a;
  border-left: 2px solid #8a8a8a;
  background: #fff;
  display: flex;
  overflow: hidden;
  box-sizing: border-box;
}
.tree {
  flex: 1;
  position: relative;
  overflow: hidden;
  font-family: "Liberation Sans", sans-serif;
  font-size: 12.8px;
  letter-spacing: -0.4px;
  color: #2a2a2a;
}
.vline {
  position: absolute;
  border-left: 1px dotted #9a9a9a;
}
.vline-a {
  left: 29px;
  top: 20px;
  height: 380px;
}
.vline-b {
  left: 50px;
  top: 36px;
  height: 272px;
}
.node {
  height: 17.6px;
  display: flex;
  align-items: center;
  position: relative;
  white-space: nowrap;
}
.node-box {
  width: 10px;
  height: 10px;
  border: 1px solid #8a8a8a;
  box-sizing: border-box;
  display: inline-flex;
  align-items: center;
  justify-content: center;
  font: 11px/8px "Liberation Sans", sans-serif;
  color: #111;
  background: #fff;
  flex: none;
}
.node-box.empty {
  visibility: hidden;
}
.node-dots {
  width: 5px;
  border-top: 1px dotted #9a9a9a;
  flex: none;
}
.node-icon {
  width: 18px;
  height: 18px;
  margin-right: 6px;
  flex: none;
}
.node-label.bold {
  font-weight: 700;
  font-size: 13.8px;
  letter-spacing: 0;
}
.node-label.soft {
  background: #ececec;
}

.tree-scroll {
  width: 17px;
  flex: none;
  background: #f0f0f0;
  display: flex;
  flex-direction: column;
  align-items: center;
}
.tree-thumb {
  width: 100%;
  height: 305px;
  flex: none;
  background: #cdcdcd;
}
.chev {
  width: 12px;
  height: 12px;
  margin: 4px 0;
  flex: none;
}
.tree-scroll .chev:last-child {
  margin-top: auto;
  margin-bottom: 2px;
}
.chev.big {
  margin: 6px 0;
}

.dock-split {
  height: 17px;
  flex: none;
  border-bottom: 3px solid #b0b0b0;
  box-sizing: border-box;
}
.prop-head {
  height: 24px;
  padding: 2px 7px 0 12px;
}
.props {
  height: 127px;
  flex: none;
  margin: 0 6px 0 4px;
  border: 2px solid #8a8a8a;
  border-right-color: #aaa;
  border-bottom-color: #aaa;
  box-sizing: border-box;
  display: flex;
  font-family: "Liberation Sans", sans-serif;
  font-size: 12.2px;
  letter-spacing: -0.2px;
  background: #fff;
}
.prop-grid {
  flex: 1;
  overflow: hidden;
}
.prop-cols {
  height: 10px;
  display: grid;
  grid-template-columns: 9px 92px 53px 1fr;
  background: #f0f0f0;
  border-bottom: 1px solid #aaa;
}
.prop-cols span {
  border-right: 1px solid #aaa;
}
.prop-group {
  height: 19.6px;
  background: #e8e8e8;
  border-bottom: 1px solid #bbb;
  display: flex;
  align-items: center;
  gap: 13px;
  padding-left: 3px;
  box-sizing: border-box;
  color: #222;
}
.prop-row {
  height: 19.6px;
  display: flex;
  padding-left: 11px;
  background: #e8e8e8;
  color: #9a9a9a;
  box-sizing: border-box;
}
.prop-row.last {
  height: 14.4px;
}
.prop-row.last .prop-key,
.prop-row.last .prop-val {
  line-height: 14px;
  border-bottom: 0;
}
.prop-key {
  width: 86px;
  background: #efefef;
  padding-left: 3px;
  line-height: 19px;
  white-space: nowrap;
  border-bottom: 1px solid #f8f8f8;
}
.prop-val {
  flex: 1;
  background: #fff;
  padding-left: 5px;
  line-height: 19px;
  border-bottom: 1px solid #eee;
  position: relative;
}
.dots-btn {
  position: absolute;
  right: 0;
  top: 0;
  width: 20px;
  height: 19px;
  background: #f0f0f0;
  color: #222;
  font-style: normal;
  text-align: center;
  line-height: 20px;
}
.prop-scroll {
  width: 20px;
  flex: none;
  display: flex;
  flex-direction: column;
  background: #f6f6f6;
}
.prop-arrow {
  height: 17px;
  background: #f0f0f0;
  border-right: 1px solid #777;
  border-bottom: 1px solid #777;
  box-sizing: border-box;
  display: flex;
  align-items: center;
  justify-content: center;
  flex: none;
}
.prop-arrow.end {
  margin-top: auto;
}
.prop-thumb {
  height: 21px;
  background: #f0f0f0;
  border-right: 1px solid #777;
  border-bottom: 1px solid #777;
  box-sizing: border-box;
}
.tri {
  width: 0;
  height: 0;
  border-left: 4px solid transparent;
  border-right: 4px solid transparent;
  border-top: 5px solid #111;
}
.tri.up {
  border-top: 0;
  border-bottom: 5px solid #111;
}

.canvas {
  width: 1142px;
  flex: none;
  background: #9e9da2;
  border-top: 1px solid #6c6c6c;
  overflow: hidden;
}
.canvas svg {
  display: block;
}
.plabels text {
  font-family: "Liberation Sans", sans-serif;
  fill: #1a1a1a;
}

.vscroll {
  width: 18px;
  flex: none;
  background: #f0f0f0;
  display: flex;
  flex-direction: column;
  align-items: center;
}
.vscroll .chev:last-child {
  margin-top: auto;
  margin-bottom: 3px;
}
.v-thumb {
  width: 100%;
  height: 385px;
  background: #cdcdcd;
  flex: none;
  margin-top: -1px;
}

.right {
  width: 90px;
  flex: none;
  display: flex;
  flex-direction: column;
}
.logo-box {
  height: 62px;
  margin: 5px 5px 0 6px;
  background: #fff;
  border-top: 2px solid #777;
  border-left: 2px solid #777;
  box-sizing: border-box;
  overflow: hidden;
}
.tools {
  margin: 9px 4px 0 3px;
  padding-top: 4px;
  border-top: 2px solid #c8c8c8;
  border-right: 2px solid #c8c8c8;
  border-bottom: 2px solid #c8c8c8;
  border-left: 1px solid #c8c8c8;
}
.tool {
  height: 23.07px;
  display: flex;
  align-items: center;
  gap: 0;
  padding-left: 3px;
  font-size: 12.3px;
  color: #4a3f4c;
  white-space: nowrap;
}
.tool-icon {
  width: 20px;
  height: 20px;
  flex: none;
}

.coords-bar {
  height: 51px;
  flex: none;
  border-bottom: 2px solid #c4c4c4;
  border-top: 1px solid #d4d4d4;
  box-sizing: border-box;
  padding-left: 145px;
}
.coords {
  width: 865px;
  height: 100%;
  box-sizing: border-box;
  border-left: 1px solid #c4c4c4;
  border-right: 1px solid #c4c4c4;
  display: grid;
  grid-template-columns: 14px 43px 20px 43px 16px 42px 26px 45px;
  grid-template-rows: 20px 20px;
  row-gap: 3px;
  padding-top: 2px;
  font-family: "Liberation Sans", sans-serif;
  font-size: 12px;
}
.c-lab {
  font-size: 14px;
  line-height: 22px;
  color: #444;
}
.c-in {
  height: 20px;
  box-sizing: border-box;
  border-top: 2px solid #8c8c8c;
  border-left: 2px solid #8c8c8c;
  padding-left: 2px;
  line-height: 18px;
  white-space: nowrap;
  overflow: hidden;
}
.c-in.off {
  color: #a2a2a2;
  background: #efefef;
}
.c-in.on {
  color: #111;
  background: #fff;
}
.c-in.last {
  border-color: #c0c0c0;
}
.c-icon {
  width: 17px;
  height: 17px;
  justify-self: center;
  align-self: center;
}
.c-icon.axes {
  width: 20px;
  height: 20px;
}
.c-pct {
  grid-row: 1 / span 2;
  grid-column: 5;
  align-self: center;
  padding: 0 0 3px 3px;
  font-size: 13px;
  color: #333;
}
.c-btn {
  height: 21px;
  border-right: 2px solid #888;
  border-bottom: 2px solid #888;
  box-sizing: border-box;
  display: flex;
  align-items: center;
  justify-content: center;
}

.status {
  height: 22px;
  flex: none;
  display: flex;
  align-items: center;
  justify-content: flex-end;
  padding-right: 6px;
  font-family: "Liberation Sans", sans-serif;
  font-size: 14px;
}
.st-box {
  width: 115px;
  height: 17px;
  border-top: 1px solid #999;
  border-left: 1px solid #999;
  box-sizing: border-box;
  margin-right: 3px;
}
.st-key {
  width: 15px;
  height: 17px;
  margin-right: 2.3px;
  border-left: 1px solid #bbb;
  border-top: 1px solid #bbb;
  box-sizing: border-box;
  text-align: center;
  line-height: 16px;
}
.k0 {
  color: #b4b4b4;
}
.k1 {
  color: #3a3a3a;
}
.k2 {
  color: #4a2a6a;
}
.taskbar {
  height: 45px;
  flex: none;
  background: #8e5a3e;
  border-top: 1px solid #c8a894;
  box-sizing: border-box;
  display: flex;
  align-items: center;
  padding-left: 19px;
  color: #f4ece6;
}
.task-slot {
  width: 60px;
  display: flex;
  justify-content: center;
}
.task-slot.explorer {
  margin-left: 9px;
  margin-right: 7px;
}
.task-btn {
  width: 63px;
  height: 42px;
  margin-right: 5px;
  background: #a1735b;
  border: 1px solid #b38d78;
  box-sizing: border-box;
  display: flex;
  align-items: center;
  justify-content: center;
}
.task-btn.active {
  background: #b79885;
  border-color: #d4bfb2;
}
.tray {
  margin-left: auto;
  display: flex;
  align-items: center;
  font-family: "Open Sans", sans-serif;
  font-size: 12px;
}
.tray svg {
  margin-right: 6px;
}
.tray-up {
  width: 0;
  height: 0;
  border-left: 4px solid transparent;
  border-right: 4px solid transparent;
  border-bottom: 4px solid #f4ece6;
  margin-right: 13px;
}
.lang,
.clock {
  display: flex;
  flex-direction: column;
  align-items: center;
  line-height: 18px;
  padding-top: 3px;
}
.lang {
  margin-left: 1px;
  width: 40px;
}
.clock {
  margin-left: 7px;
  margin-right: 23px;
  width: 74px;
}
</style>
